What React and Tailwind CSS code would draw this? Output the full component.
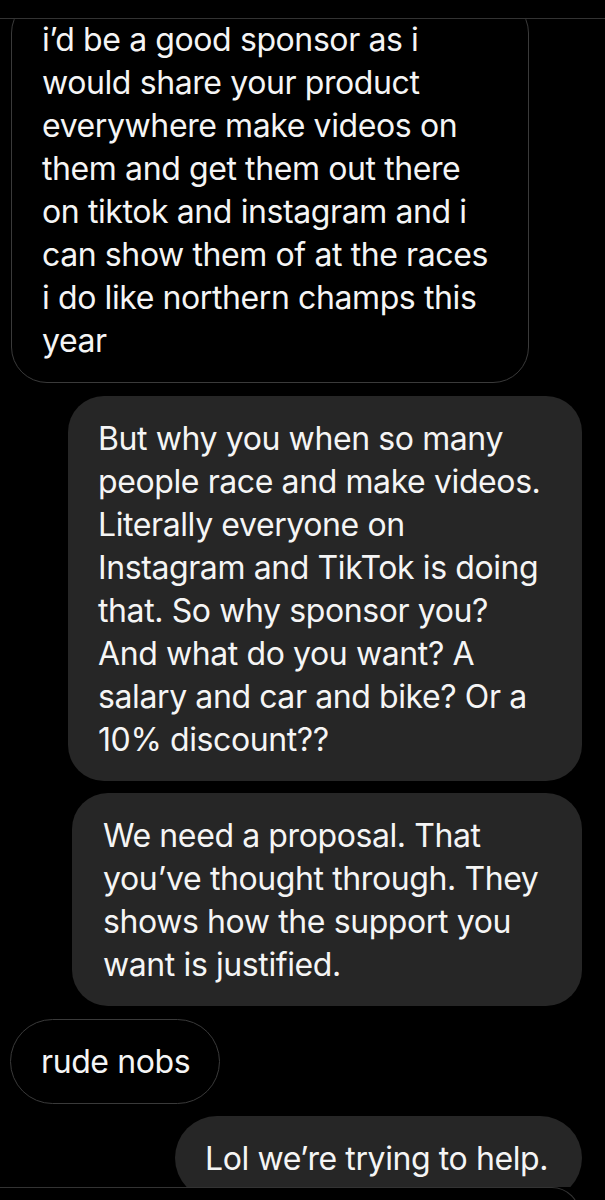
import React from "react";

function Lines({ lines }) {
  return (
    <>
      {lines.map((l, i) => (
        <div key={i} className="whitespace-nowrap">
          {l}
        </div>
      ))}
    </>
  );
}

export default function App() {
  return (
    <div className="w-[605px] h-[1200px] bg-black overflow-hidden flex flex-col font-['Inter',sans-serif] text-[32px] leading-[43px] tracking-[-0.4px] text-[#f5f5f5]">
      <div className="h-[19px] shrink-0 border-b border-[#333333]" />
      <div className="h-[1168px] shrink-0 overflow-hidden flex flex-col items-start">
        <div className="-mt-[22px] ml-[11px] w-[518px] border border-[#3a3a3a] rounded-[36px] pl-[30px] py-[20px]">
          <Lines
            lines={[
              "i’d be a good sponsor as i",
              "would share your product",
              "everywhere make videos on",
              "them and get them out there",
              "on tiktok and instagram and i",
              "can show them of at the races",
              "i do like northern champs this",
              "year",
            ]}
          />
        </div>
        <div className="mt-[13px] ml-[68px] w-[514px] bg-[#262626] rounded-[36px] pl-[30px] py-[20.5px]">
          <Lines
            lines={[
              "But why you when so many",
              "people race and make videos.",
              "Literally everyone on",
              "Instagram and TikTok is doing",
              "that. So why sponsor you?",
              "And what do you want? A",
              "salary and car and bike? Or a",
              "10% discount??",
            ]}
          />
        </div>
        <div className="mt-[12px] ml-[72px] w-[510px] bg-[#262626] rounded-[36px] pl-[31px] py-[20.5px]">
          <Lines
            lines={[
              "We need a proposal. That",
              "you’ve thought through. They",
              "shows how the support you",
              "want is justified.",
            ]}
          />
        </div>
        <div className="mt-[13px] ml-[10px] w-[210px] border border-[#3a3a3a] rounded-full pl-[30px] py-[20px]">
          <Lines lines={["rude nobs"]} />
        </div>
        <div className="mt-[12px] ml-[175px] w-[407px] bg-[#262626] rounded-full pl-[30px] py-[20.5px]">
          <Lines lines={["Lol we’re trying to help."]} />
        </div>
      </div>
      <div className="flex-1">
        <div className="-ml-[2px] w-[582px] h-[40px] border-t border-r border-[#333333] rounded-tr-[28px]" />
      </div>
    </div>
  );
}
